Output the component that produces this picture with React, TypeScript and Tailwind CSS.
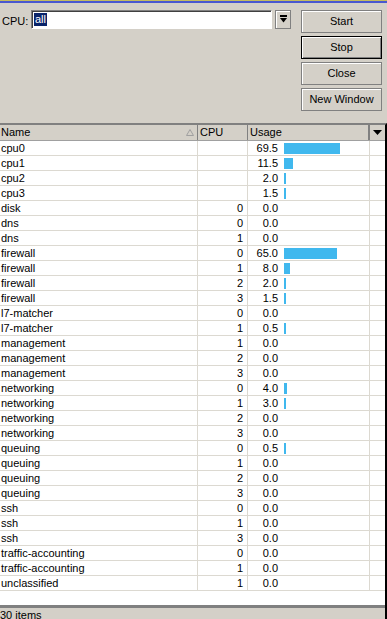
import React from "react";

type Row = { name: string; cpu: string; usage: number };

const rows: Row[] = [
  { name: "cpu0", cpu: "", usage: 69.5 },
  { name: "cpu1", cpu: "", usage: 11.5 },
  { name: "cpu2", cpu: "", usage: 2.0 },
  { name: "cpu3", cpu: "", usage: 1.5 },
  { name: "disk", cpu: "0", usage: 0 },
  { name: "dns", cpu: "0", usage: 0 },
  { name: "dns", cpu: "1", usage: 0 },
  { name: "firewall", cpu: "0", usage: 65.0 },
  { name: "firewall", cpu: "1", usage: 8.0 },
  { name: "firewall", cpu: "2", usage: 2.0 },
  { name: "firewall", cpu: "3", usage: 1.5 },
  { name: "l7-matcher", cpu: "0", usage: 0 },
  { name: "l7-matcher", cpu: "1", usage: 0.5 },
  { name: "management", cpu: "1", usage: 0 },
  { name: "management", cpu: "2", usage: 0 },
  { name: "management", cpu: "3", usage: 0 },
  { name: "networking", cpu: "0", usage: 4.0 },
  { name: "networking", cpu: "1", usage: 3.0 },
  { name: "networking", cpu: "2", usage: 0 },
  { name: "networking", cpu: "3", usage: 0 },
  { name: "queuing", cpu: "0", usage: 0.5 },
  { name: "queuing", cpu: "1", usage: 0 },
  { name: "queuing", cpu: "2", usage: 0 },
  { name: "queuing", cpu: "3", usage: 0 },
  { name: "ssh", cpu: "0", usage: 0 },
  { name: "ssh", cpu: "1", usage: 0 },
  { name: "ssh", cpu: "3", usage: 0 },
  { name: "traffic-accounting", cpu: "0", usage: 0 },
  { name: "traffic-accounting", cpu: "1", usage: 0 },
  { name: "unclassified", cpu: "1", usage: 0 },
];

const barWidth = (v: number) => (v <= 0 ? 0 : Math.max(2, Math.round(v * 0.81)));

const WinButton = ({ label, isDefault }: { label: string; isDefault?: boolean }) => (
  <div
    className={`h-[23px] w-[81px] flex items-center justify-center text-[11px] text-black bg-[#d4d0c8] ${
      isDefault
        ? "border border-black shadow-[inset_1px_1px_0_#fff,inset_-1px_-1px_0_#808080]"
        : "border border-[#808080] shadow-[inset_1px_1px_0_#fff]"
    }`}
  >
    {label}
  </div>
);

export default function App() {
  return (
    <div className="w-[387px] h-[619px] overflow-hidden bg-[#d4d0c8] flex flex-col font-['Liberation_Sans',Arial,sans-serif] text-[11px] text-black">
      {/* title edge */}
      <div className="h-[1px] bg-[#c4bc60]" />
      <div className="h-[2px] bg-[#4a58d0]" />

      {/* top panel */}
      <div className="h-[120px] flex pt-[7px]">
        <div className="flex-1 flex items-start pl-[2px]">
          <span className="mt-[3px] w-[29px]">CPU:</span>
          <div className="h-[19px] w-[241px] bg-white border border-[#808080] border-r-white border-b-white shadow-[inset_1px_1px_0_#404040] flex items-center pl-[2px]">
            <span className="bg-[#0a246a] text-white leading-[13px] px-[1px]">all</span>
          </div>
          <div className="ml-[3px] h-[19px] w-[16px] border border-[#808080] shadow-[inset_1px_1px_0_#fff] flex items-center justify-center">
            <svg width="9" height="9" viewBox="0 0 9 9">
              <rect x="1" y="0" width="7" height="2" fill="#000" />
              <polygon points="1,3 8,3 4.5,7.5" fill="#000" />
            </svg>
          </div>
        </div>
        <div className="flex flex-col gap-[3px] pr-[5px]">
          <WinButton label="Start" />
          <WinButton label="Stop" isDefault />
          <WinButton label="Close" />
          <WinButton label="New Window" />
        </div>
      </div>

      {/* table */}
      <div className="border-t-2 border-[#808080] flex-1 flex flex-col border-r-2 border-r-black min-h-0">
        <div className="h-[16px] flex bg-[#d4d0c8] border-b border-[#a0a0a0] shrink-0">
          <div className="w-[198px] flex items-center justify-between pl-[1px] pr-[3px] border-r border-[#808080]">
            <span>Name</span>
            <svg width="8" height="7" viewBox="0 0 8 7">
              <polygon points="4,0.5 7.5,6.5 0.5,6.5" fill="none" stroke="#a0a0a0" strokeWidth="1" />
            </svg>
          </div>
          <div className="w-[50px] flex items-center pl-[2px] border-r border-[#808080]">CPU</div>
          <div className="w-[122px] flex items-center pl-[2px] border-r-2 border-[#808080]">Usage</div>
          <div className="flex-1 flex items-center justify-center">
            <svg width="9" height="5" viewBox="0 0 9 5">
              <polygon points="0,0 9,0 4.5,5" fill="#000" />
            </svg>
          </div>
        </div>

        <div className="flex-1 bg-white flex flex-col min-h-0">
          {rows.map((r, i) => (
            <div key={i} className="h-[15px] flex border-b border-[#dcd9d1] shrink-0 leading-[14px]">
              <div className="w-[198px] pl-[1px] border-r border-[#dcd9d1]">{r.name}</div>
              <div className="w-[50px] pr-[4px] text-right border-r border-[#dcd9d1]">{r.cpu}</div>
              <div className="w-[122px] flex items-center border-r border-[#dcd9d1]">
                <span className="w-[30px] text-right">{r.usage.toFixed(1)}</span>
                <div className="ml-[6px] h-[11px] bg-[#40b8ee]" style={{ width: barWidth(r.usage) }} />
              </div>
              <div className="flex-1" />
            </div>
          ))}
        </div>

        {/* status bar */}
        <div className="h-[14px] shrink-0 border-t-[3px] border-[#808080] bg-[#d4d0c8] flex items-end">
          <div className="h-[12px] overflow-hidden flex items-end">
            <span className="leading-[11px] mb-[-3px] pl-[0px] border-b border-black pr-[4px]">30 items</span>
          </div>
        </div>
      </div>
    </div>
  );
}
